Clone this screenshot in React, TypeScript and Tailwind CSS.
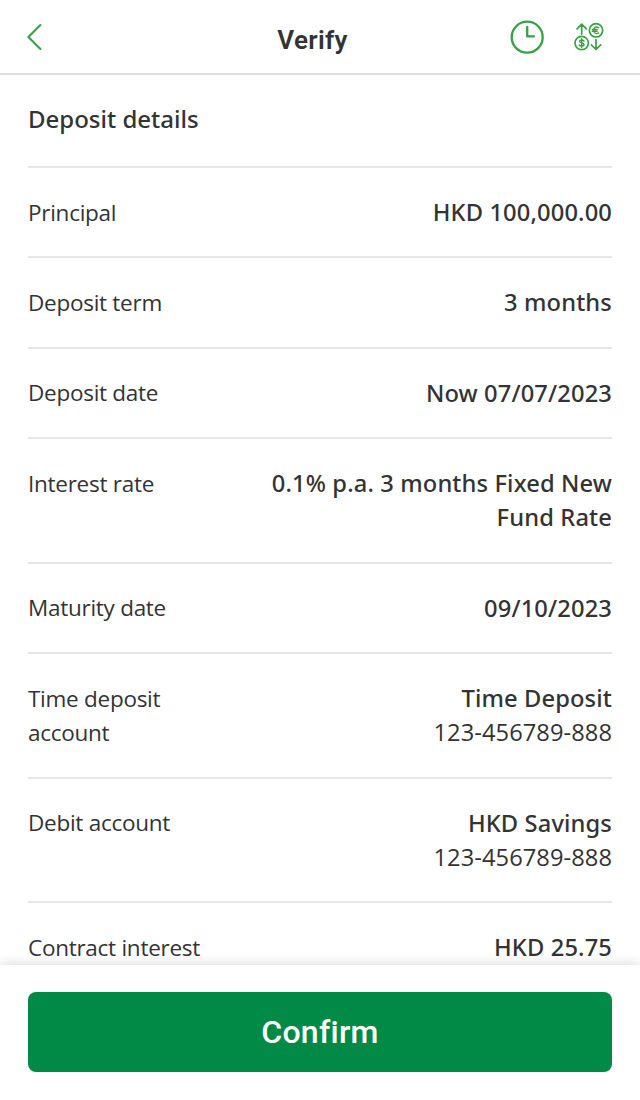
import { ReactNode } from "react"

const ROWS = [
  { label: "Principal", value: "HKD 100,000.00" },
  { label: "Deposit term", value: "3 months" },
  { label: "Deposit date", value: "Now 07/07/2023" },
  { label: "Interest rate", value: "0.1% p.a. 3 months Fixed New Fund Rate" },
  { label: "Maturity date", value: "09/10/2023" },
  { label: "Time deposit account", value: "Time Deposit", sub: "123-456789-888" },
  { label: "Debit account", value: "HKD Savings", sub: "123-456789-888" },
  { label: "Contract interest", value: "HKD 25.75" },
]

function IconButton({ label, children }: { label: string; children: ReactNode }) {
  return (
    <button aria-label={label} className="flex items-center justify-center text-[#36a145]">
      {children}
    </button>
  )
}

function BackIcon() {
  return (
    <svg width="16" height="28" viewBox="0 0 16 28" fill="none" stroke="currentColor" strokeWidth="2.1" strokeLinecap="round" strokeLinejoin="round">
      <path d="M13.4 2 1.4 14 13.4 26" />
    </svg>
  )
}

function ClockIcon() {
  return (
    <svg width="34" height="34" viewBox="0 0 34 34" fill="none" stroke="currentColor" strokeWidth="2.3" strokeLinecap="round" strokeLinejoin="round">
      <circle cx="17.2" cy="17.2" r="15.5" />
      <path d="M17.2 6.8V16.4H24" />
    </svg>
  )
}

function ExchangeIcon() {
  return (
    <svg width="30" height="30" viewBox="0 0 30 30" fill="none" stroke="currentColor" strokeWidth="1.7" strokeLinecap="round" strokeLinejoin="round">
      <path d="M7.7 12V2.5M3 6.8 7.7 2.1 12.4 6.8" />
      <path d="M22 17.5V27.1M17.3 22.8 22 27.5 26.7 22.8" />
      <circle cx="22" cy="8.3" r="6.7" />
      <circle cx="7.7" cy="21" r="6.7" />
      <path d="M24.6 5.7C22 4 19.8 5.5 19.8 8.3S22 12.5 24.6 10.9M18.2 7.5H23.2M18.2 9.2H23.2" strokeWidth="1.4" />
      <path d="M10 19.1C9.4 17.7 5.6 17.5 5.6 19.4S10 20.7 10 22.6 6 24.5 5.3 22.9M7.7 16.8V25.2" strokeWidth="1.4" />
    </svg>
  )
}

export default function App() {
  return (
    <div className="flex h-[1100px] w-[640px] flex-col overflow-hidden bg-white font-['Noto_Sans','Open_Sans',sans-serif] text-[#333333]">
      {/* Header */}
      <header className="flex h-[75px] shrink-0 items-center border-b-2 border-[#dedede] pr-[36px] pl-[27px]">
        <div className="flex flex-1 pt-px">
          <IconButton label="Back">
            <BackIcon />
          </IconButton>
        </div>
        <h1 className="pt-[6px] pr-[6px] font-['Roboto',sans-serif] text-[26px] leading-[32px] font-semibold tracking-[0.3px]">Verify</h1>
        <div className="flex flex-1 items-center justify-end gap-[30px] pt-px">
          <IconButton label="History">
            <ClockIcon />
          </IconButton>
          <IconButton label="Exchange">
            <ExchangeIcon />
          </IconButton>
        </div>
      </header>

      {/* Details */}
      <main className="min-h-0 flex-1 overflow-hidden px-[28px]">
        <h2 className="h-[91px] pt-[27px] text-[24px] leading-[34px] font-medium">Deposit details</h2>
        <dl>
          {ROWS.map((row) => (
            <div key={row.label} className="flex justify-between border-t-2 border-[#e6e6e6] pt-[27.1px] pb-[26.1px] leading-[34.2px]">
              <dt className="w-[190px] shrink-0 pt-[0.6px] font-['Open_Sans','Noto_Sans',sans-serif] text-[22.5px] tracking-[-0.27px]">{row.label}</dt>
              <dd className="w-[360px] pb-px text-right">
                <p className="text-[23.7px] font-medium tracking-[0.13px]">{row.value}</p>
                {row.sub && <p className="font-['Open_Sans','Noto_Sans',sans-serif] text-[23.7px] tracking-[0.05px]">{row.sub}</p>}
              </dd>
            </div>
          ))}
        </dl>
      </main>

      {/* Action bar */}
      <footer className="relative h-[135px] shrink-0 bg-white px-[28px] pt-[27.4px] shadow-[0_0_12px_rgba(0,0,0,0.18)]">
        <button className="h-[80px] w-full rounded-[8px] bg-[#008a45] font-['Roboto',sans-serif] text-[32px] font-medium tracking-[0.3px] text-white">
          Confirm
        </button>
      </footer>
    </div>
  )
}
